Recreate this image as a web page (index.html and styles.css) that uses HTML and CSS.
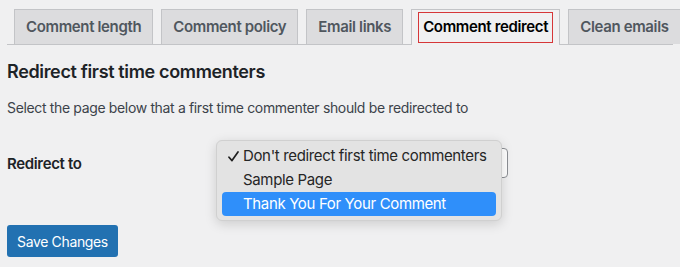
FILE: index.html
```html
<!DOCTYPE html>
<html lang="en">
  <head>
    <meta charset="UTF-8" />
    <title>Comment redirect</title>
    <link rel="stylesheet" href="styles.css">
  </head>
  <body>
    <div class="wrap">
      <!-- TABS -->
      <nav class="tabs">
        <a class="tab">Comment length</a>
        <a class="tab">Comment policy</a>
        <a class="tab">Email links</a>
        <a class="tab active"><span class="focus">Comment redirect</span></a>
        <a class="tab">Clean emails</a>
      </nav>

      <h2 class="title">Redirect first time commenters</h2>
      <p class="desc">Select the page below that a first time commenter should be redirected to</p>

      <div class="field">
        <label class="label">Redirect to</label>
        <div class="select-wrap">
          <div class="select"></div>
          <!-- open dropdown menu -->
          <ul class="menu">
            <li class="item checked">
              <svg class="check" width="11" height="11" viewBox="0 0 11 11"><path d="M1 6.2 L4 9.6 L10 1" fill="none" stroke="#1f1f1f" stroke-width="1.7" stroke-linecap="round" stroke-linejoin="round"/></svg>Don't redirect first time commenters
            </li>
            <li class="item">Sample Page</li>
            <li class="item selected">Thank You For Your Comment</li>
          </ul>
        </div>
      </div>

      <button class="save">Save Changes</button>
    </div>
  </body>
</html>
```

FILE: styles.css
```css
:root {
  --bg: #f0f0f1;
  --tab: #dcdcde;
  --border: #c3c4c7;
  --text: #1d2327;
  --muted: #50575e;
  --primary: #2271b1;
}

* {
  box-sizing: border-box;
  font-family: "Inter", "Liberation Sans", sans-serif;
  letter-spacing: -0.35px;
}

body {
  background: var(--bg);
  margin: 0;
  color: var(--text);
}

.wrap {
  padding: 0 7px;
}

/* ───── TABS ───── */
.tabs {
  display: flex;
  gap: 8px;
  padding: 9px 0 0 7px;
  border-bottom: 1px solid var(--border);
}

.tab {
  background: var(--tab);
  border: 1px solid var(--border);
  border-bottom: none;
  color: var(--muted);
  font-size: 15px;
  font-weight: 600;
  line-height: 24px;
  padding: 5px 11px;
  white-space: nowrap;
}

.tab.active {
  background: var(--bg);
  color: #000;
  padding: 2px 6px 0;
  margin-bottom: -1px;
}

.tab .focus {
  display: block;
  border: 1px solid #d63638;
  padding: 2px 4px 3px;
}

/* ───── CONTENT ───── */
.title {
  font-size: 18px;
  font-weight: 600;
  margin: 15px 0 0;
  line-height: 24px;
}

.desc {
  font-size: 14px;
  color: #3c434a;
  margin: 14px 0 0;
  line-height: 20px;
}

.field {
  display: flex;
  align-items: center;
  margin-top: 28px;
  height: 34px;
}

.label {
  width: 209px;
  font-size: 15px;
  font-weight: 600;
}

.select-wrap {
  position: relative;
}

.select {
  width: 292px;
  height: 30px;
  border: 1px solid #8c8f94;
  border-radius: 4px;
  background: #fff;
}

.menu {
  position: absolute;
  top: -8px;
  left: 0;
  width: 286px;
  margin: 0;
  padding: 3px 5px 4px;
  list-style: none;
  background: #e3e3e3;
  border: 1px solid #d0d0d0;
  border-radius: 6px;
  box-shadow: 0 3px 12px rgba(0, 0, 0, 0.15);
}

.item {
  font-size: 15px;
  color: #262626;
  line-height: 24px;
  padding-left: 21px;
  border-radius: 4px;
  white-space: nowrap;
  position: relative;
}

.check {
  position: absolute;
  left: 6px;
  top: 7px;
}

.item.selected {
  background: #2f8ffa;
  color: #fff;
}

.save {
  margin-top: 45px;
  background: var(--primary);
  color: #fff;
  border: none;
  border-radius: 3px;
  font-size: 14px;
  height: 32px;
  padding: 0 10px;
}
```
